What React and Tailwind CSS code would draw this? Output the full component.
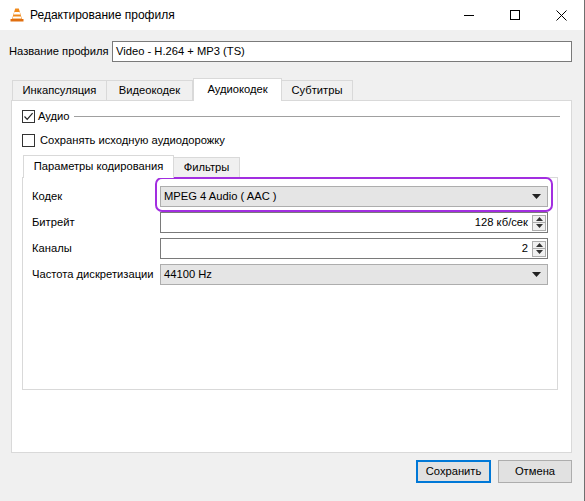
import React from 'react';

// VLC-style traffic cone for the window icon
const ConeIcon = () => (
  <svg width="16" height="16" viewBox="0 0 16 16">
    <path d="M6.2 1.5 L9.8 1.5 L13 12 L3 12 Z" fill="#f08a1c" />
    <path d="M5.4 5 L10.6 5 L11.3 7.4 L4.7 7.4 Z" fill="#fff" />
    <path d="M4.2 9.6 L11.8 9.6 L12.4 11.6 L3.6 11.6 Z" fill="#fff" />
    <path d="M1.5 12 L14.5 12 L14.5 14.5 L1.5 14.5 Z" fill="#e06f10" />
  </svg>
);

const Checkbox = ({ checked }) => (
  <div className="w-[13px] h-[13px] border border-[#333] bg-white flex items-center justify-center shrink-0">
    {checked && (
      <svg width="11" height="11" viewBox="0 0 11 11">
        <path d="M1.5 5.5 L4.2 8.3 L9.6 2.2" fill="none" stroke="#222" strokeWidth="1.2" />
      </svg>
    )}
  </div>
);

const Arrow = () => (
  <svg width="9" height="5" viewBox="0 0 9 5">
    <path d="M0 0 L9 0 L4.5 5 Z" fill="#222" />
  </svg>
);

const Combo = ({ value }) => (
  <div className="h-[21px] flex-1 flex items-center justify-between bg-[#e5e5e5] border border-[#adadad] pl-[3px] pr-[6px]">
    <span>{value}</span>
    <Arrow />
  </div>
);

const Spin = ({ value }) => (
  <div className="h-[21px] flex-1 flex items-center justify-end bg-white border border-[#7a7a7a] pr-[1px]">
    <span className="mr-[4px]">{value}</span>
    <div className="w-[14px] h-[16px] border border-[#adadad] bg-[#f0f0f0] flex flex-col">
      <div className="flex-1 flex items-center justify-center border-b border-[#adadad]">
        <svg width="7" height="4" viewBox="0 0 7 4"><path d="M0 4 L7 4 L3.5 0 Z" fill="#333" /></svg>
      </div>
      <div className="flex-1 flex items-center justify-center">
        <svg width="7" height="4" viewBox="0 0 7 4"><path d="M0 0 L7 0 L3.5 4 Z" fill="#333" /></svg>
      </div>
    </div>
  </div>
);

const Tab = ({ label, active, w }) =>
  active ? (
    <div className={`${w} h-[23px] bg-white border border-b-0 border-[#d9d9d9] flex items-center justify-center -mb-px relative z-10 pb-[2px]`}>
      {label}
    </div>
  ) : (
    <div className={`${w} h-[20px] bg-[#f0f0f0] border border-b-0 border-[#d9d9d9] -ml-px first:ml-0 flex items-center justify-center`}>
      {label}
    </div>
  );

const FieldRow = ({ label, children }) => (
  <div className="flex items-center h-[21px]">
    <div className="w-[128px] shrink-0">{label}</div>
    {children}
  </div>
);

export default function App() {
  return (
    <div
      className="w-[585px] h-[501px] bg-[#f0f0f0] text-[11.2px] text-black flex flex-col border-r border-[#6f6f6f] whitespace-nowrap"
      style={{ fontFamily: '"Liberation Sans", Arial, sans-serif' }}
    >
      {/* title bar */}
      <div className="h-[30px] bg-white flex items-center shrink-0 text-[12px]">
        <div className="ml-[9px] mr-[5px]"><ConeIcon /></div>
        <span>Редактирование профиля</span>
        <div className="ml-auto flex items-center">
          <div className="w-[46px] h-[30px] flex items-center justify-center">
            <div className="w-[10px] h-px bg-black" />
          </div>
          <div className="w-[46px] h-[30px] flex items-center justify-center">
            <div className="w-[10px] h-[10px] border border-black" />
          </div>
          <div className="w-[46px] h-[30px] flex items-center justify-center">
            <svg width="11" height="11" viewBox="0 0 11 11">
              <path d="M0.5 0.5 L10.5 10.5 M10.5 0.5 L0.5 10.5" stroke="#000" strokeWidth="1" />
            </svg>
          </div>
        </div>
      </div>

      <div className="flex-1 flex flex-col pl-[9px] pr-[12px]">
        {/* profile name */}
        <div className="mt-[11px] flex items-center h-[21px]">
          <div className="w-[103px] shrink-0">Название профиля</div>
          <div className="flex-1 h-[21px] border border-[#7a7a7a] bg-white flex items-center px-[3px]">
            Video - H.264 + MP3 (TS)
          </div>
        </div>

        {/* main tabs */}
        <div className="mt-[16px] ml-[2px] flex flex-col">
          <div className="flex items-end pl-[1px]">
            <Tab label="Инкапсуляция" w="w-[95px]" />
            <Tab label="Видеокодек" w="w-[87px]" />
            <Tab label="Аудиокодек" active w="w-[89px]" />
            <Tab label="Субтитры" w="w-[72px]" />
          </div>
          <div className="h-[353px] bg-white border border-[#d9d9d9] px-[10px] pt-[8px]">
            <div className="flex items-center h-[14px]">
              <Checkbox checked />
              <span className="ml-[3px]">Аудио</span>
              <div className="flex-1 h-px bg-[#a0a0a0] ml-[4px] mr-[1px]" />
            </div>
            <div className="flex items-center h-[14px] mt-[10px]">
              <Checkbox />
              <span className="ml-[5px]">Сохранять исходную аудиодорожку</span>
            </div>

            {/* inner tabs */}
            <div className="mt-[8px] flex flex-col w-[536px]">
              <div className="flex items-end pl-[1px]">
                <Tab label="Параметры кодирования" active w="w-[151px]" />
                <Tab label="Фильтры" w="w-[67px]" />
              </div>
              <div className="h-[213px] border border-[#d9d9d9] bg-white pl-[9px] pr-[9px] pt-[8px] flex flex-col gap-[5px]">
                <FieldRow label="Кодек">
                  <div className="flex-1 relative flex">
                    <Combo value="MPEG 4 Audio ( AAC )" />
                    <div className="absolute -left-[5px] -right-[5px] -top-[9px] -bottom-[5px] border-2 border-[#a22ee0] rounded-[7px] pointer-events-none" />
                  </div>
                </FieldRow>
                <FieldRow label="Битрейт">
                  <Spin value="128 кб/сек" />
                </FieldRow>
                <FieldRow label="Каналы">
                  <Spin value="2" />
                </FieldRow>
                <FieldRow label="Частота дискретизации">
                  <Combo value="44100 Hz" />
                </FieldRow>
              </div>
            </div>
          </div>
        </div>

        {/* dialog buttons */}
        <div className="mt-[7px] flex justify-end gap-[7px]">
          <button className="w-[75px] h-[23px] bg-[#e1e1e1] border-2 border-[#0078d7]">Сохранить</button>
          <button className="w-[74px] h-[23px] bg-[#e1e1e1] border border-[#adadad]">Отмена</button>
        </div>
      </div>
    </div>
  );
}
